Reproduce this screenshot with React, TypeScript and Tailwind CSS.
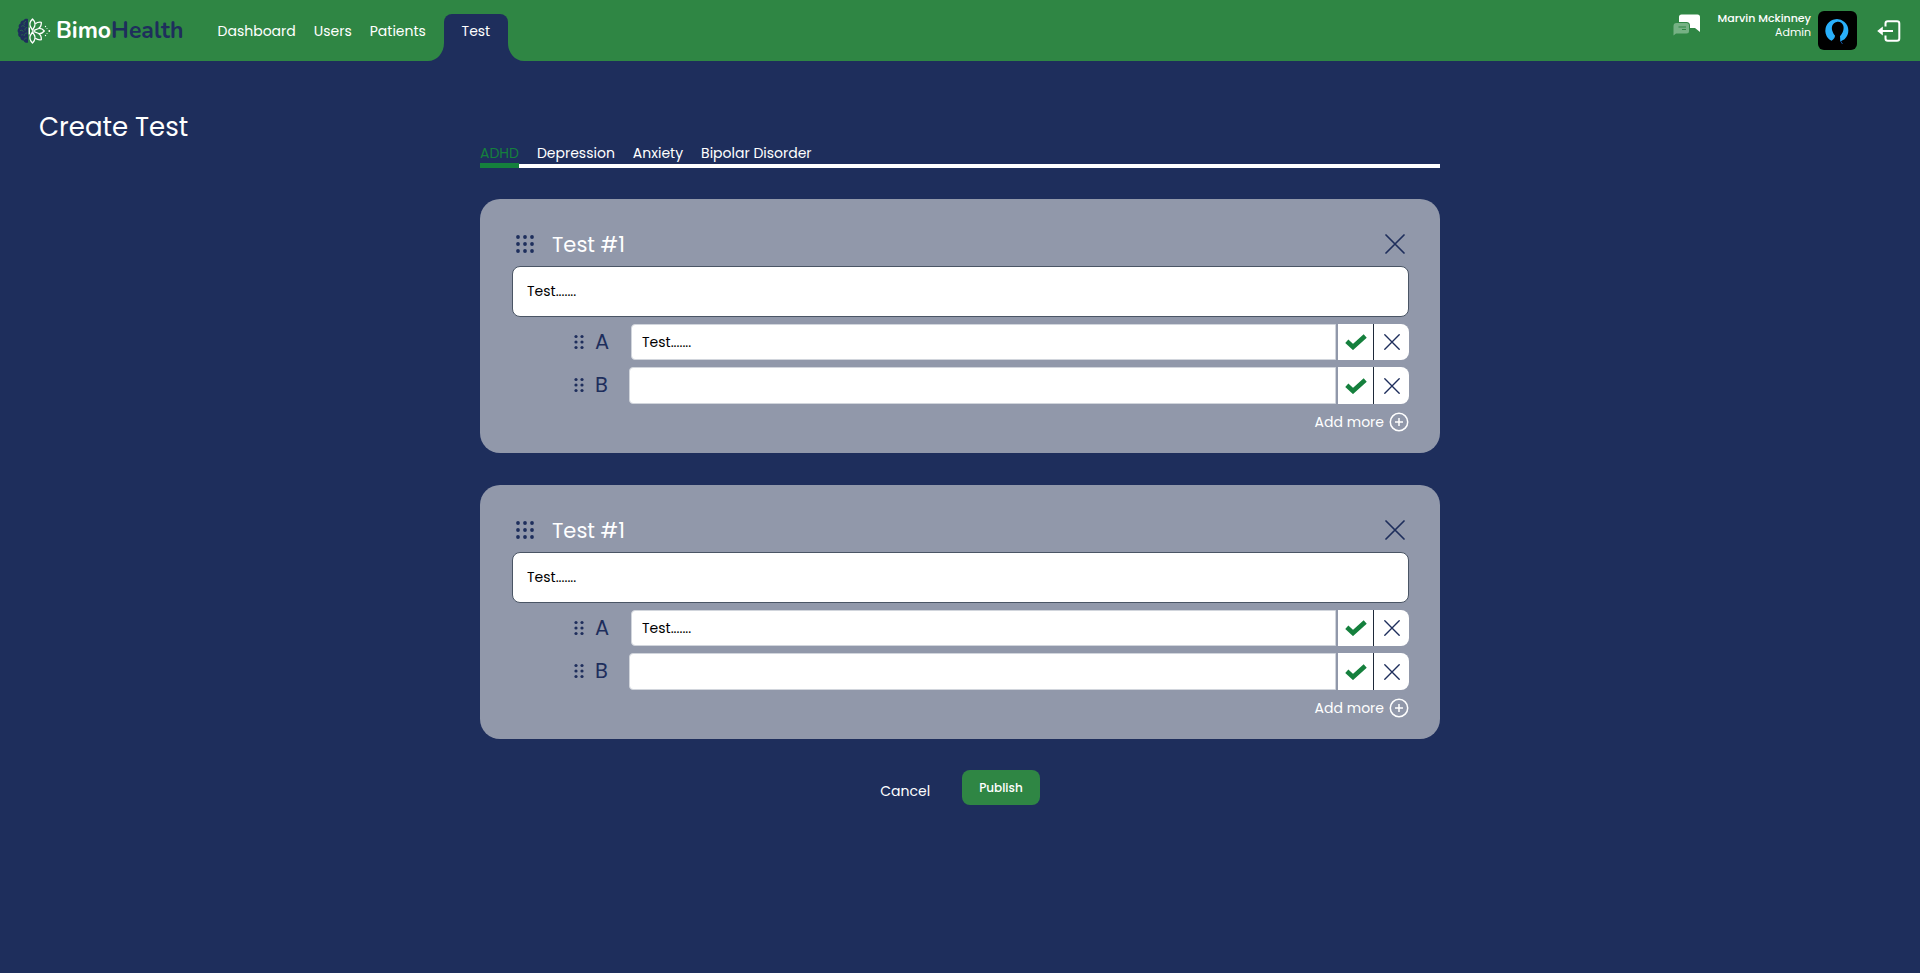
import React, { useState } from "react";

const FONT = "font-['Poppins','Inter',sans-serif]";

function Logo() {
  return (
    <svg viewBox="0 0 34 26" className="h-[26px] w-[34px] shrink-0" aria-hidden="true">
      <path
        d="M11 1.2C9.300 .4 7.200 1 6.500 2.500C4.500 2.300 3.200 3.800 3.500 5.500C1.700 6.300 1.200 8.200 2 9.700C.3 11 .2 13.500 1.400 14.900C.7 16.900 1.600 18.800 3.300 19.300C3.300 21.300 4.700 22.600 6.500 22.400C7.200 24.400 9.400 25.300 11 24.600Z"
        fill="#1e2e5c"
      />
      <path
        d="M8.600 3.500C7 4 6.500 5.200 7.200 6.400M4.500 8.200C5.500 7.200 7 7.500 7.500 8.600M9.800 9.500C8.200 9.800 7.500 11 8 12.300M3.300 12.500C4.500 11.700 5.800 12.200 6.200 13.400M9.800 15C8.200 15 7.200 16 7.500 17.400M4.200 17.200C5 16.400 5.600 16.500 6.200 17M9.500 20C8.500 19.800 7.500 20.400 7.400 21.300"
        fill="none"
        stroke="#2f8644"
        strokeWidth=".6"
        strokeLinecap="round"
      />
      <g fill="none" stroke="#fff" strokeWidth="1.300" strokeLinejoin="round">
        <path d="M15.500 1C17.600 3 18.600 5.800 17.600 8.400L15.500 12.200L13.300 8.400C12.300 5.800 13.400 3 15.500 1Z" />
        <path d="M15.500 25C17.600 23 18.600 20.200 17.600 17.600L15.500 13.800L13.300 17.600C12.300 20.200 13.400 23 15.500 25Z" />
        <path d="M18.300 5.800C20 4.500 22.300 4 24.300 4.300C24.500 6.800 23.600 9.200 21.700 10.500L16.500 12.600" />
        <path d="M18.300 20.200C20 21.500 22.300 22 24.300 21.700C24.500 19.200 23.600 16.800 21.700 15.500L16.500 13.400" />
        <path d="M21.700 10.500C24 10.300 26 11.300 27.300 13C26 14.700 24 15.700 21.700 15.500" />
        <path d="M12.300 9.500V16.500" />
      </g>
      <g fill="#fff">
        <circle cx="28.500" cy="8.500" r=".7" />
        <circle cx="30" cy="10.500" r=".5" />
        <circle cx="32.300" cy="13" r=".9" />
        <circle cx="30" cy="15.500" r=".5" />
        <circle cx="28.500" cy="17.500" r=".7" />
      </g>
    </svg>
  );
}

function ChatIcon() {
  return (
    <svg viewBox="0 0 28 22" className="h-[22px] w-7" aria-hidden="true">
      <path d="M8.500 .5H24.500Q27 .5 27 3V18L22 14H17V11.500Q17 8 13.500 8H6V3Q6 .5 8.500 .5Z" fill="#fff" />
      <path d="M3.500 9H13.500Q16 9 16 11.500V17Q16 19.500 13.500 19.500H3L.5 21.500V12Q.5 9 3.500 9Z" fill="#76b184" />
      <path d="M5.500 13H13M9 15.500H13" stroke="#2f8644" strokeWidth="1" />
    </svg>
  );
}

function LogoutIcon() {
  return (
    <svg viewBox="0 0 24 22" className="h-[22px] w-6" aria-hidden="true">
      <path
        d="M8.500 6.500V3.500Q8.500 1.200 10.800 1.200H20Q22.300 1.200 22.300 3.500V18.500Q22.300 20.800 20 20.800H10.800Q8.500 20.800 8.500 18.500V15.500"
        fill="none"
        stroke="#fff"
        strokeWidth="2"
      />
      <path d="M4 11H16" stroke="#fff" strokeWidth="2" />
      <path d="M5.800 6.500V15.500L.2 11Z" fill="#fff" />
    </svg>
  );
}

function Avatar() {
  return (
    <svg viewBox="0 0 39 39" className="size-[39px] rounded-md bg-black" role="img" aria-label="Marvin Mckinney">
      <path
        d="M13.500 29.800A11.500 11.500 0 1 1 26.500 28.200L22.300 30.500L22 25.200C24.800 22.500 26.300 18 25.300 14.800C24.300 11.500 21.500 10.400 18.600 11C14.500 11.900 13.200 16 14.200 19.500C14.800 21.800 16 23.600 17 24.600C17 26.500 16 28.500 13.500 29.800Z"
        fill="#29b0fb"
      />
      <path d="M22.500 30L24.500 33" stroke="#12509a" strokeWidth="1" />
    </svg>
  );
}

function Dots({ columns }: { columns: 2 | 3 }) {
  const wide = columns === 3;
  const step = wide ? 7 : 6;
  const size = wide ? 18 : 16;
  return (
    <svg
      viewBox={wide ? "0 0 18 18" : "0 0 10 16"}
      className={wide ? "h-[18px] w-[18px]" : "h-4 w-[10px]"}
      fill="#1e2e5c"
      aria-hidden="true"
    >
      {[0, 1, 2].map((row) =>
        Array.from({ length: columns }, (_, col) => (
          <circle key={`${row}-${col}`} cx={2 + col * step} cy={size / 2 + (row - 1) * (wide ? 7 : 5.5)} r={wide ? 1.9 : 1.6} />
        ))
      )}
    </svg>
  );
}

function Cross({ className }: { className: string }) {
  return (
    <svg viewBox="0 0 20 20" className={className} aria-hidden="true">
      <path d="M1 1L19 19M19 1L1 19" stroke="#1e2e5c" strokeWidth="1.700" strokeLinecap="round" />
    </svg>
  );
}

function Check() {
  return (
    <svg viewBox="0 0 22 16" className="h-4 w-[22px]" aria-hidden="true">
      <path d="M1.800 7.300L8 13L20.200 2" fill="none" stroke="#15803d" strokeWidth="4.600" />
    </svg>
  );
}

function AnswerRow({ id, letter, value }: { id: string; letter: string; value: string }) {
  return (
    <div className={letter === "A" ? "flex h-9 items-stretch" : "flex h-[37px] items-stretch"}>
      <button type="button" aria-label={`Move answer ${letter}`} className="ml-[62px] flex h-9 w-[10px] items-center">
        <Dots columns={2} />
      </button>
      <label htmlFor={id} className="ml-[11px] flex h-9 w-4 items-center text-[21px] leading-8 text-[#1e2e5c]">
        {letter}
      </label>
      <input
        id={id}
        defaultValue={value}
        className={`${letter === "A" ? "ml-5" : "ml-[18px]"} min-w-0 flex-1 rounded-l-sm border border-gray-300 bg-white px-[10px] text-sm text-black outline-none`}
      />
      <div className="ml-[2px] flex w-[71px] overflow-hidden rounded-r-lg bg-white">
        <button type="button" aria-label={`Mark ${letter} as correct`} className="flex flex-1 items-center justify-center border-r border-gray-800">
          <Check />
        </button>
        <button type="button" aria-label={`Remove answer ${letter}`} className="flex flex-1 items-center justify-center">
          <Cross className="size-4" />
        </button>
      </div>
    </div>
  );
}

function TestCard({ id }: { id: string }) {
  return (
    <section className="rounded-[20px] bg-[#9198aa] pt-[30px] pr-[31px] pb-[21px] pl-8">
      <div className="flex h-[37px] items-start">
        <button type="button" aria-label="Move question" className="mt-[6px] ml-1">
          <Dots columns={3} />
        </button>
        <label htmlFor={`${id}-question`} className="ml-[18px] text-[21px] leading-8 text-white">
          Test #1
        </label>
        <button type="button" aria-label="Remove question" className="mt-[5px] mr-1 ml-auto">
          <Cross className="size-5" />
        </button>
      </div>
      <input
        id={`${id}-question`}
        defaultValue="Test......."
        className="h-[51px] w-full rounded-lg border border-gray-600 bg-white px-[14px] text-sm text-black outline-none"
      />
      <div className="mt-[7px] flex flex-col gap-[7px]">
        <AnswerRow id={`${id}-a`} letter="A" value="Test......." />
        <AnswerRow id={`${id}-b`} letter="B" value="" />
      </div>
      <button type="button" className="mt-2 ml-auto flex h-5 items-center gap-[5px] text-sm text-white">
        Add more
        <svg viewBox="0 0 20 20" className="size-5" fill="none" stroke="#fff" strokeWidth="1.500" aria-hidden="true">
          <circle cx="10" cy="10" r="8.700" />
          <path d="M10 6V14M6 10H14" />
        </svg>
      </button>
    </section>
  );
}

const CATEGORIES = ["ADHD", "Depression", "Anxiety", "Bipolar Disorder"];

export default function App() {
  const [active, setActive] = useState("ADHD");
  return (
    <div className={`min-h-screen bg-[#1e2e5c] text-white ${FONT}`}>
      <header className="flex h-[61px] items-center bg-[#2f8644] pr-[19px] pl-[17px]">
        <a href="#home" className="flex items-center gap-[5px]" aria-label="BimoHealth">
          <Logo />
          <span className="font-['Nunito','Lato',sans-serif] text-[23px] leading-7 font-bold">
            Bimo<span className="text-[#1e2e5c]">Health</span>
          </span>
        </a>
        <nav className="ml-[34px] flex items-center gap-[18px] self-stretch text-sm leading-6">
          <a href="#dashboard">Dashboard</a>
          <a href="#users">Users</a>
          <a href="#patients">Patients</a>
          <a href="#test" className="relative mt-[14px] flex h-[47px] w-16 justify-center rounded-t-lg bg-[#1e2e5c] pt-[5px]">
            Test
            <svg viewBox="0 0 16 18" className="absolute right-full bottom-0 h-[18px] w-4" fill="#1e2e5c" aria-hidden="true">
              <path d="M16 0V18H0C9 18 16 10 16 0Z" />
            </svg>
            <svg viewBox="0 0 16 18" className="absolute bottom-0 left-full h-[18px] w-4" fill="#1e2e5c" aria-hidden="true">
              <path d="M0 0V18H16C7 18 0 10 0 0Z" />
            </svg>
          </a>
        </nav>
        <div className="ml-auto flex items-center">
          <button type="button" aria-label="Messages" className="mb-3">
            <ChatIcon />
          </button>
          <div className="mb-3 ml-[17px] text-right text-[11px] leading-[14px]">
            <p className="font-medium">Marvin Mckinney</p>
            <p>Admin</p>
          </div>
          <div className="ml-[7px]">
            <Avatar />
          </div>
          <button type="button" aria-label="Log out" className="ml-5">
            <LogoutIcon />
          </button>
        </div>
      </header>

      <main>
        <h1 className="pt-[46px] pl-[39px] text-[26px] leading-10">Create Test</h1>
        <div className="mx-auto w-1/2">
          <div role="tablist" className="flex h-[21px] items-end gap-[18px] shadow-[inset_0_-4px_0_white]">
            {CATEGORIES.map((name) => (
              <button
                key={name}
                type="button"
                role="tab"
                aria-selected={active === name}
                onClick={() => setActive(name)}
                className={`border-b-[5px] text-sm ${
                  active === name ? "border-[#15803d] text-[#15803d]" : "border-transparent"
                }`}
              >
                {name}
              </button>
            ))}
          </div>
          <form className="mt-[31px]" onSubmit={(event) => event.preventDefault()}>
            <div className="flex flex-col gap-8">
              <TestCard id="first" />
              <TestCard id="second" />
            </div>
            <div className="mt-[31px] flex items-start justify-center gap-8">
              <button type="button" className="pt-[11px] text-sm">
                Cancel
              </button>
              <button type="submit" className="h-[35px] rounded-lg bg-[#2f8644] px-[17px] text-xs font-medium">
                Publish
              </button>
            </div>
          </form>
        </div>
      </main>
    </div>
  );
}
